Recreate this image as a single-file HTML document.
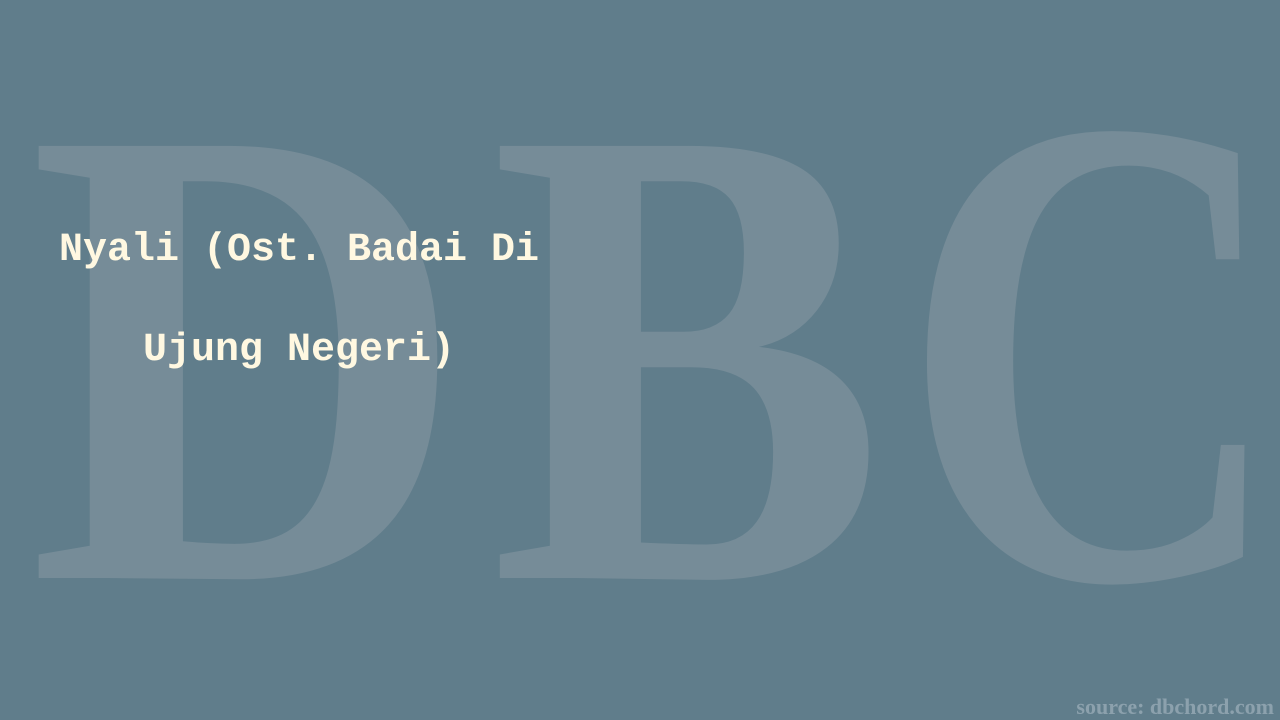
<!DOCTYPE html>
<html><head><meta charset="utf-8"><style>
html,body{margin:0;padding:0;}
body{width:1280px;height:720px;background:#607d8b;position:relative;overflow:hidden;}
svg{position:absolute;left:0;top:0;}
.t{position:absolute;left:0;width:598px;text-align:center;font-family:"Liberation Mono",monospace;font-weight:bold;font-size:40px;color:#fff8e1;line-height:46px;white-space:nowrap;}
.src{position:absolute;right:6px;top:695px;font-family:"Liberation Serif",serif;font-weight:bold;font-size:22px;color:#8ca1ad;line-height:24px;}
</style></head><body>
<svg width="1280" height="720">
<g fill="#768c98" font-family="Liberation Serif, serif" font-weight="bold" font-size="660">
<text x="28" y="578" textLength="439" lengthAdjust="spacingAndGlyphs">D</text>
<text x="490" y="578" textLength="395" lengthAdjust="spacingAndGlyphs">B</text>
<text x="901" y="578" textLength="384" lengthAdjust="spacingAndGlyphs" font-size="675">C</text>
</g>
</svg>
<div class="t" style="top:228px">Nyali (Ost. Badai Di</div>
<div class="t" style="top:328px">Ujung Negeri)</div>
<div class="src">source: dbchord.com</div>
</body></html>
